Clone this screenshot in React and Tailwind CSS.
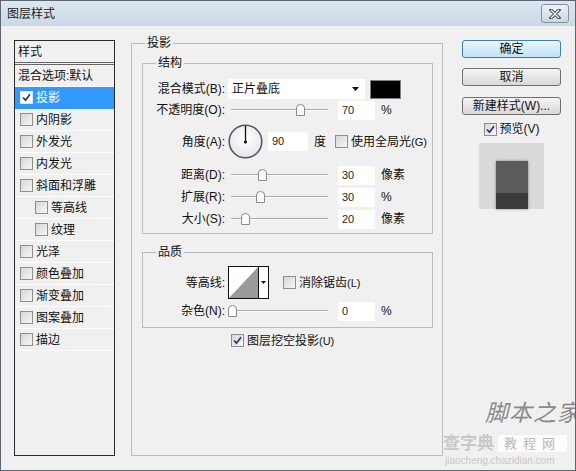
import React from 'react';

const FONT = "font-['Liberation_Sans','Noto_Sans_CJK_SC',sans-serif]";

// --- petits contrôles ---
const Check = ({ checked, light }) => (
  <span
    className={`w-[13px] h-[13px] border flex items-center justify-center shrink-0 ${
      light ? 'border-[#dfe9f5] bg-white' : 'border-[#8e8f8f] bg-linear-to-br from-[#d6d6d6] to-[#f7f7f7]'
    }`}
  >
    {checked && (
      <svg width="9" height="9" viewBox="0 0 9 9">
        <path d="M1 4.5 L3.5 7.2 L8 1.2" stroke="#26366b" strokeWidth="1.7" fill="none" />
      </svg>
    )}
  </span>
);

const Slider = ({ pos }) => (
  <div className="relative w-[100px] h-[20px] shrink-0">
    <div className="absolute left-[3px] right-0 top-[9px] h-[2px] border-t border-[#a9a9a9] border-b border-b-white" />
    <svg className="absolute top-[4px]" style={{ left: pos - 4 }} width="9" height="12" viewBox="0 0 9 12">
      <path d="M0.5 11.5 V4 Q0.5 0.5 4.5 0.5 Q8.5 0.5 8.5 4 V11.5 Z" fill="#fbfbfb" stroke="#8a8a8a" />
    </svg>
  </div>
);

const Field = ({ value, w = 'w-[37px]' }) => (
  <div className={`${w} h-[19px] bg-white flex items-center pl-[4px] text-[11px] text-[#222] shrink-0`}>{value}</div>
);

const Label = ({ children, w = 'w-[82px]' }) => (
  <div className={`${w} text-right text-[12px] leading-none text-[#111] shrink-0`}>{children}</div>
);

const Group = ({ title, className, children }) => (
  <div className={`relative border border-[#bdbdbd] ${className}`}>
    <div className="absolute -top-[9px] left-[13px] px-[2px] bg-[#f0f0f0] text-[12px] leading-[17px] text-[#111]">{title}</div>
    {children}
  </div>
);

const SliderRow = ({ label, pos, value, unit, className }) => (
  <div className={`flex items-center h-[20px] ${className}`}>
    <Label>{label}</Label>
    <div className="ml-[3px]">
      <Slider pos={pos} />
    </div>
    <div className="ml-[10px]">
      <Field value={value} />
    </div>
    <span className="ml-[6px] text-[12px] text-[#111]">{unit}</span>
  </div>
);

const styles = [
  { name: '投影', checked: true, selected: true },
  { name: '内阴影' },
  { name: '外发光' },
  { name: '内发光' },
  { name: '斜面和浮雕' },
  { name: '等高线', sub: true },
  { name: '纹理', sub: true },
  { name: '光泽' },
  { name: '颜色叠加' },
  { name: '渐变叠加' },
  { name: '图案叠加' },
  { name: '描边' },
];

const Button = ({ children, primary, className }) => (
  <div
    className={`w-[99px] h-[18px] rounded-[3px] border flex items-center justify-center text-[12px] leading-none text-[#111] ${
      primary
        ? 'border-[#3c7fb1] bg-linear-to-b from-[#e8f6fd] to-[#bfe3f6]'
        : 'border-[#707070] bg-linear-to-b from-[#f5f5f5] to-[#d8d8d8]'
    } ${className}`}
  >
    {children}
  </div>
);

export default function App() {
  return (
    <div className={`relative w-[576px] h-[471px] bg-[#f0f0f0] border border-[#5d6772] flex flex-col overflow-hidden ${FONT}`}>
      {/* BARRE DE TITRE */}
      <div className="h-[25px] shrink-0 flex items-center justify-between pl-[6px] pr-[6px] bg-linear-to-b from-[#dde7f1] to-[#cad8e7]">
        <span className="text-[12px] text-[#1c1c1c]">图层样式</span>
        <div className="w-[28px] h-[19px] rounded-[3px] border border-[#8793a1] bg-linear-to-b from-[#eef2f6] to-[#cdd7e2] flex items-center justify-center">
          <svg width="12" height="10" viewBox="0 0 12 10">
            <path d="M2 1 L10 9 M10 1 L2 9" stroke="#3f4956" strokeWidth="3.2" strokeLinecap="square" />
            <path d="M2 1 L10 9 M10 1 L2 9" stroke="#ffffff" strokeWidth="1.2" />
          </svg>
        </div>
      </div>

      {/* CORPS */}
      <div className="flex-1 flex pl-[13px] pt-[14px]">
        {/* Liste des styles */}
        <div className="w-[101px] h-[416px] border border-[#2b2b2b] flex flex-col shrink-0">
          <div className="h-[21px] flex items-center pl-[3px] text-[12px] leading-none text-[#111]">样式</div>
          <div className="h-[3px] border-t border-b border-[#666]" />
          <div className="h-[22px] flex items-center pl-[3px] text-[12px] leading-none text-[#111] border-b border-white">混合选项:默认</div>
          {styles.map((s) => (
            <div
              key={s.name}
              className={`h-[22px] flex items-center gap-[3px] text-[12px] leading-none border-b ${
                s.selected ? 'bg-[#3399ff] text-white border-[#3399ff]' : 'text-[#111] border-white'
              } ${s.sub ? 'pl-[20px]' : 'pl-[5px]'}`}
            >
              <Check checked={s.checked} light={s.selected} />
              <span>{s.name}</span>
            </div>
          ))}
        </div>

        {/* Panneau principal */}
        <Group title="投影" className="ml-[16px] mt-[3px] w-[312px] h-[413px] shrink-0">
          <div className="pl-[10px] pt-[19px]">
            <Group title="结构" className="w-[291px] h-[171px]">
              <div className="flex flex-col pt-[15px]">
                <div className="flex items-center h-[20px]">
                  <Label>混合模式(B):</Label>
                  <div className="ml-[3px] w-[137px] h-[20px] bg-white flex items-center justify-between pl-[4px] pr-[6px] text-[12px] text-[#111]">
                    <span>正片叠底</span>
                    <svg width="7" height="4" viewBox="0 0 7 4">
                      <path d="M0 0 H7 L3.5 4 Z" fill="#111" />
                    </svg>
                  </div>
                  <div className="ml-[5px] w-[31px] h-[19px] bg-black border border-[#808080]" />
                </div>
                <SliderRow label="不透明度(O):" pos={72} value="70" unit="%" className="mt-[1px]" />
                <div className="flex items-center h-[35px] mt-[4px]">
                  <Label>角度(A):</Label>
                  <svg className="ml-[3px] shrink-0" width="35" height="35" viewBox="0 0 35 35">
                    <defs>
                      <radialGradient id="dial" cx="50%" cy="40%" r="60%">
                        <stop offset="0%" stopColor="#ffffff" />
                        <stop offset="100%" stopColor="#e4e6ea" />
                      </radialGradient>
                    </defs>
                    <circle cx="17.5" cy="17.5" r="16.3" fill="url(#dial)" stroke="#4e5866" strokeWidth="1.6" />
                    <path d="M17.5 18 V2" stroke="#111" strokeWidth="1.3" />
                    <circle cx="17.5" cy="18" r="1.6" fill="#111" />
                  </svg>
                  <div className="ml-[5px]">
                    <Field value="90" w="w-[40px]" />
                  </div>
                  <span className="ml-[6px] text-[12px] text-[#111]">度</span>
                  <div className="ml-[9px] flex items-center gap-[3px] text-[12px] leading-none text-[#111]">
                    <Check />
                    <span>使用全局光<span className="text-[11px]">(G)</span></span>
                  </div>
                </div>
                <SliderRow label="距离(D):" pos={34} value="30" unit="像素" className="mt-[6px]" />
                <SliderRow label="扩展(R):" pos={32} value="30" unit="%" className="mt-[2px]" />
                <SliderRow label="大小(S):" pos={17} value="20" unit="像素" className="mt-[2px]" />
              </div>
            </Group>

            <Group title="品质" className="mt-[18px] w-[291px] h-[76px]">
              <div className="flex flex-col pt-[13px]">
                <div className="flex items-center h-[33px]">
                  <Label>等高线:</Label>
                  <div className="ml-[3px] w-[41px] h-[33px] border border-[#111] bg-white flex shrink-0">
                    <svg width="29" height="31" viewBox="0 0 29 31">
                      <path d="M0 31 L29 0 V31 Z" fill="#9a9a9a" />
                    </svg>
                    <div className="flex-1 border-l border-[#111] flex items-center justify-center">
                      <svg width="5" height="3" viewBox="0 0 5 3">
                        <path d="M0 0 H5 L2.5 3 Z" fill="#111" />
                      </svg>
                    </div>
                  </div>
                  <div className="ml-[14px] flex items-center gap-[3px] text-[12px] leading-none text-[#111]">
                    <Check />
                    <span>消除锯齿<span className="text-[11px]">(L)</span></span>
                  </div>
                </div>
                <SliderRow label="杂色(N):" pos={4} value="0" unit="%" className="mt-[2px]" />
              </div>
            </Group>

            <div className="mt-[6px] pl-[89px] flex items-center gap-[3px] text-[12px] leading-none text-[#111]">
              <Check checked />
              <span>图层挖空投影<span className="text-[11px]">(U)</span></span>
            </div>
          </div>
        </Group>

        {/* Colonne des boutons */}
        <div className="ml-[19px] w-[99px] flex flex-col items-center shrink-0">
          <Button primary>确定</Button>
          <Button className="mt-[10px]">取消</Button>
          <Button className="mt-[11px]">新建样式(W)...</Button>
          <div className="mt-[7px] h-[14px] flex items-center gap-[3px] text-[12px] leading-none text-[#111]">
            <Check checked />
            <span>预览(V)</span>
          </div>
          <div className="mt-[7px] w-[65px] h-[66px] bg-[#dadada] flex flex-col items-center justify-end">
            <div className="w-[32px] h-[48px] flex flex-col shadow-[0_0_3px_rgba(0,0,0,0.4)]">
              <div className="h-[32px] bg-[#5b5b5b]" />
              <div className="flex-1 bg-[#3b3b3b]" />
            </div>
          </div>
        </div>
      </div>

      {/* Filigrane */}
      <div className="absolute left-[484px] top-[401px] text-[23px] italic text-[#8a8a8a] font-['Liberation_Serif','Noto_Sans_CJK_SC',serif] tracking-[1px] leading-none whitespace-nowrap">
        脚本之家
      </div>
      <div className="absolute left-[442px] top-[434px] flex items-center gap-[4px]">
        <span className="text-[17px] leading-none text-[#c8c8c8] font-bold">查字典</span>
        <span className="px-[6px] h-[17px] bg-white/80 rounded-[2px] text-[13px] leading-[17px] text-[#b8b8b8] tracking-[6px]">教程网</span>
      </div>
      <div className="absolute left-[444px] top-[455px] text-[10px] leading-none text-[#c8c8c8]">
        jiaocheng.chazidian.com
      </div>
    </div>
  );
}
